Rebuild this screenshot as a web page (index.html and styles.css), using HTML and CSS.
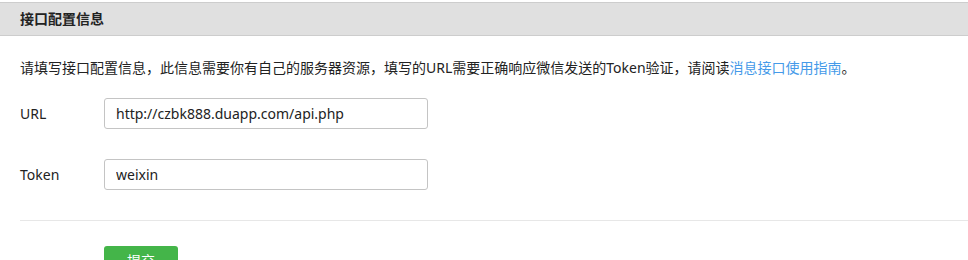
FILE: index.html
```html
<!DOCTYPE html>
<html lang="zh-CN">
<head>
	<meta charset="UTF-8">
	<title>接口配置信息</title>
	<link rel="stylesheet" href="styles.css">
</head>
<body>
	<div class="panel">
		<h3 class="panel-hd">接口配置信息</h3>
		<div class="panel-bd">
			<p class="desc">请填写接口配置信息，此信息需要你有自己的服务器资源，填写的URL需要正确响应微信发送的Token验证，请阅读<a href="">消息接口使用指南</a>。</p>
			<div class="form-row">
				<label class="form-label">URL</label>
				<input class="form-input" type="text" value="http://czbk888.duapp.com/api.php">
			</div>
			<div class="form-row">
				<label class="form-label">Token</label>
				<input class="form-input" type="text" value="weixin">
			</div>
			<div class="form-ft">
				<a class="btn-green" href="">提交</a>
			</div>
		</div>
	</div>
</body>
</html>
```

FILE: styles.css
```css
*{margin:0;padding:0;}
body{font-family:"Noto Sans","Noto Sans CJK SC",sans-serif;font-size:14px;color:#222;padding-top:2px;background:#fff;}
a{text-decoration:none;}

.panel-hd{height:32px;line-height:32px;padding-left:20px;font-size:14px;font-weight:bold;color:#222;background-color:#e0e0e0;border-top:1px solid #cdcdcd;border-bottom:1px solid #cdcdcd;}
.panel-bd{padding-left:20px;}
.desc{margin-top:22px;line-height:20px;color:#222;}
.desc a{color:#459ae9;}

.form-row{display:flex;align-items:center;height:31px;}
.desc + .form-row{margin-top:20px;}
.form-row + .form-row{margin-top:30px;}
.form-label{width:84px;}
.form-input{box-sizing:border-box;width:324px;height:31px;padding:0 11px;border:1px solid #c4c4c4;border-radius:3px;font-family:inherit;font-size:14px;color:#222;outline:none;}

.form-ft{margin-top:30px;border-top:1px solid #e7e7e7;padding:25px 0 0 84px;}
.btn-green{display:inline-block;width:74px;height:30px;line-height:30px;text-align:center;color:#fff;background-color:#44b549;border-radius:3px;}
```
